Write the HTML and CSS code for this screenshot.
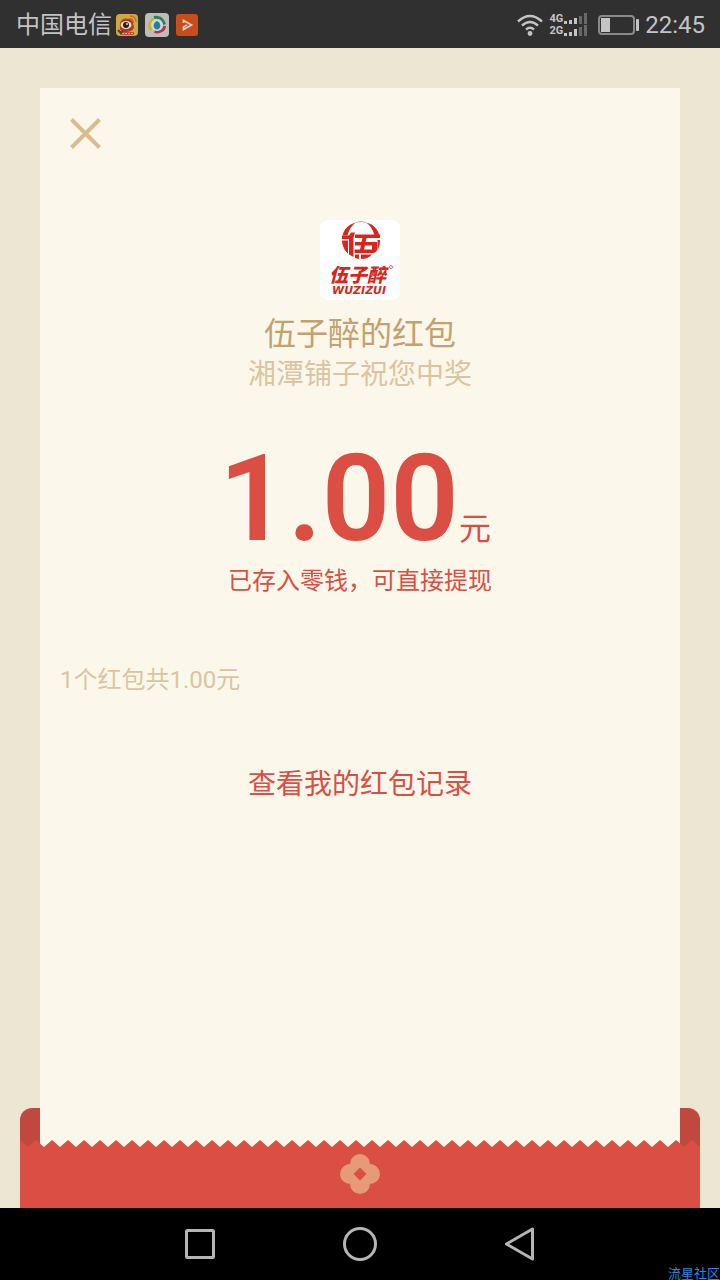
FILE: index.html
```html
<!DOCTYPE html>
<html lang="zh-CN">
<head>
<meta charset="utf-8">
<meta name="viewport" content="width=device-width, initial-scale=1">
<title>伍子醉的红包</title>
<link rel="stylesheet" href="styles.css">
</head>
<body>
<header class="status">
  <span class="carrier">中国电信</span>
  <div class="apps">
    <svg class="app" width="22" height="22" viewBox="0 0 22 22" aria-hidden="true">
      <rect width="22" height="22" rx="4" fill="#cfa83f"/>
      <path d="M4 12C3 7 8 3 12 5c4-2 7 2 5 5 3 5-2 8-7 8-4 0-7-2-6-6z" fill="#b93626"/>
      <ellipse cx="10" cy="11" rx="5.500" ry="4" fill="#e5dccb"/>
      <circle cx="10" cy="11" r="3" fill="#242424"/><circle cx="11" cy="10" r="1" fill="#ddd"/>
      <path d="M14 5q3 0 3 3M14 2q6 0 6 6" fill="none" stroke="#c96e28" stroke-width="1.3"/>
      <path d="M5 18h13v3H4z" fill="#c9502a"/><path d="M6 19.500h11" stroke="#dfb287" stroke-dasharray="2 1"/>
      <path d="M2 16l3 3 2-2" stroke="#404a20" stroke-width="2" fill="none"/>
    </svg>
    <svg class="app" width="24" height="24" viewBox="0 0 24 24" aria-hidden="true">
      <rect width="24" height="24" rx="4" fill="#bdbdbd"/>
      <g fill="none" stroke-width="3">
        <path d="M9 4.500c5-1.500 9 2 10.500 7" stroke="#248647"/>
        <path d="M19.500 13c0 4-5 7-10 5.500" stroke="#b33a32"/>
        <path d="M6.500 17C3 13 5 8 9 6" stroke="#cfb51c"/>
      </g>
      <circle cx="12" cy="12" r="6" fill="#d6d6d6"/>
      <path d="M12 8c4 1 5 8 0 8.500-5-.5-4-7.500 0-8.500z" fill="#237eaa"/>
    </svg>
    <svg class="app" width="22" height="22" viewBox="0 0 22 22" aria-hidden="true">
      <rect width="22" height="22" rx="3" fill="#c94d18"/>
      <path d="M7.500 9V6.500l8 4.500-8 4.500V13l3.500-2" fill="none" stroke="#d9cbc4" stroke-width="1.800"/>
    </svg>
  </div>
  <div class="indicators">
    <svg width="26" height="22" viewBox="0 0 26 22" fill="none" stroke="#c4c4c4" stroke-width="2.400" role="img" aria-label="Wi-Fi">
      <path d="M1 7.500Q13-3.500 25 7.500M5 11.500q8-7 16 0M9 15.500q4-3.500 8 0"/>
      <circle cx="13" cy="19.500" r="2.400" fill="#c4c4c4" stroke="none"/>
    </svg>
    <div class="networks">
      <div class="network"><span>4G</span>
        <svg width="24" height="12" viewBox="0 0 24 12" fill="#c4c4c4" aria-hidden="true"><path d="M0 8h3v3H0zM5 7h3v4H5zM10 5h3v6h-3z"/><path d="M15 3h3v8h-3zM20 0h3v11h-3z" fill="#686868"/></svg>
      </div>
      <div class="network"><span>2G</span>
        <svg width="24" height="12" viewBox="0 0 24 12" fill="#c4c4c4" aria-hidden="true"><path d="M0 8h3v3H0zM5 7h3v4H5zM10 4h3v7h-3z"/><path d="M15 2h3v9h-3zM20 0h3v11h-3z" fill="#686868"/></svg>
      </div>
    </div>
    <svg class="battery" width="41" height="20" viewBox="0 0 41 20" role="img" aria-label="电池">
      <rect x="1" y="1" width="35" height="18" rx="3" fill="none" stroke="#8a8a8a" stroke-width="2"/>
      <rect x="3" y="3" width="9" height="14" fill="#c4c4c4"/><rect x="38" y="4" width="3" height="12" rx="1" fill="#c4c4c4"/>
    </svg>
    <time class="clock">22:45</time>
  </div>
</header>

<main class="screen">
  <div class="envelope-back"></div>
  <section class="card">
    <button class="close" type="button" aria-label="关闭">
      <svg width="32" height="32" viewBox="0 0 32 32" fill="none" stroke="#dabd8c" stroke-width="4"><path d="M1.500 1.500l28 28M29.500 1.500l-28 28"/></svg>
    </button>
    <svg class="avatar" width="80" height="80" viewBox="0 0 80 80" role="img" aria-label="伍子醉">
      <rect width="80" height="80" rx="8" fill="#fff"/>
      <g fill="#da251c">
        <path d="M36 2.500C29 4 24 9 22.500 15.500h5C29 10 31 6 36 2.500zM46 2.500c7 1.500 12 6.500 13.500 13h-5c-1.500-5.500-3.500-9.500-8.500-13z"/>
        <path d="M35 2.500q6-2 12 0-6-1-12 0z"/>
        <path d="M22 20.500h6v13c-3.500-3-6-8-6-13z"/>
        <path d="M22 15.500h7l2-3h4l-1.500 5V37L29 34.500V19h-7z"/>
        <path d="M35 14.500h25V18H46.500l-1 4H57v8c-1 2-2 3-4 3H34.500v-3.500H40l1-4h-6V22h6.500l1-4H35zM45 25.500l-1 4h8v-4z" fill-rule="evenodd"/>
        <path d="M57.500 20H60c0 6-2 10-5 13l2.500-4zM35 34.500h4V39l-4-1zM41 34.500h11c-3 3-6 4.500-11 4.500z"/>
      </g>
      <text x="9" y="62" class="logo-name">伍子醉</text>
      <text x="12" y="74" class="logo-latin">WUZIZUI</text>
      <circle cx="71" cy="47" r="1.500" fill="none" stroke="#da251c" stroke-width=".7"/>
    </svg>
    <h1 class="sender">伍子醉的红包</h1>
    <p class="wish">湘潭铺子祝您中奖</p>
    <p class="amount"><strong class="number">1.00</strong><span class="unit">元</span></p>
    <p class="deposit">已存入零钱，可直接提现</p>
    <p class="count">1个红包共1.00元</p>
    <a class="records" href="#records">查看我的红包记录</a>
  </section>
  <div class="envelope-front">
    <svg class="teeth" width="100%" height="7" aria-hidden="true">
      <defs><pattern id="tooth" width="16" height="7" patternUnits="userSpaceOnUse"><path d="M0 0l8 7 8-7v7H0z" fill="#da4e43"/></pattern></defs>
      <rect width="100%" height="7" fill="url(#tooth)"/>
    </svg>
    <div class="pocket">
      <svg width="40" height="40" viewBox="0 0 40 40" aria-hidden="true">
        <g fill="#e59b78"><circle cx="20" cy="10" r="10"/><circle cx="10" cy="20" r="10"/><circle cx="30" cy="20" r="10"/><circle cx="20" cy="30" r="10"/></g>
        <path d="M20 13.500l6.500 6.500-6.500 6.500-6.500-6.500z" fill="#da4e43"/>
      </svg>
    </div>
  </div>
</main>

<nav class="system">
  <button type="button" aria-label="最近任务"><svg width="34" height="34" viewBox="0 0 34 34"><rect x="3.500" y="3.500" width="27" height="27" rx="1"/></svg></button>
  <button type="button" aria-label="主屏幕"><svg width="34" height="34" viewBox="0 0 34 34"><circle cx="17" cy="17" r="15.500"/></svg></button>
  <button type="button" aria-label="返回"><svg width="34" height="34" viewBox="0 0 34 34"><path d="M29.500 2v30L3.500 17z"/></svg></button>
  <span class="watermark">流星社区</span>
</nav>
</body>
</html>
```
FILE: styles.css
```css
* { box-sizing: border-box; }

body {
  margin: 0;
  min-height: 100vh;
  display: flex;
  flex-direction: column;
  background: #ede6d3;
  font-family: Roboto, "Noto Sans CJK SC", sans-serif;
}

h1, p { margin: 0; font-weight: 400; }
svg { display: block; flex: none; }

button {
  padding: 0;
  border: 0;
  background: none;
  cursor: pointer;
}

.status {
  height: 48px;
  padding: 2px 15px 0 16px;
  display: flex;
  align-items: center;
  background: #303030;
  color: #c4c4c4;
}

.carrier { font-size: 24px; line-height: 46px; }

.apps {
  margin-left: 4px;
  display: flex;
  align-items: center;
  gap: 7px;
}

.indicators {
  margin-left: auto;
  display: flex;
  align-items: center;
}

.networks { margin: 0 10px 0 6px; }

.network {
  display: flex;
  align-items: center;
  gap: 1px;
  font: 700 11px/12px Roboto, sans-serif;
}

.clock { margin-left: 6px; font-size: 24px; }

.screen {
  flex: 1;
  padding: 40px 20px 0;
  display: grid;
  grid-template-columns: 1fr;
  grid-template-rows: 1fr 32px 68px;
}

.envelope-back {
  grid-area: 2 / 1 / 4 / 2;
  border-radius: 12px 12px 0 0;
  background: #c1483f;
}

.card {
  grid-area: 1 / 1 / 3 / 2;
  margin: 0 20px -7px;
  padding: 30px 20px;
  display: flex;
  flex-direction: column;
  align-items: center;
  background: #fcf7eb;
  text-align: center;
}

.close { align-self: flex-start; margin-left: 10px; }
.avatar { margin-top: 70px; }

.logo-name {
  font: italic 900 19px "Noto Sans CJK SC", sans-serif;
  fill: #da251c;
}

.logo-latin {
  font: italic 700 11px "DejaVu Sans", sans-serif;
  fill: #da251c;
}

.sender {
  margin-top: 14px;
  font-size: 32px;
  line-height: 40px;
  color: #c2a26f;
}

.wish { font-size: 28px; line-height: 42px; color: #dbc5a0; }

.amount {
  margin-top: 43px;
  padding-right: 10px;
  display: flex;
  align-items: baseline;
  color: #da4e43;
}

.number { font-size: 120px; line-height: 120px; font-weight: 600; }
.unit { font-size: 32px; line-height: 40px; }
.deposit { margin-top: 4px; font-size: 24px; line-height: 36px; color: #da4e43; }

.count {
  align-self: flex-start;
  margin-top: 63px;
  font-size: 24px;
  line-height: 36px;
  color: #dbc5a0;
}

.records {
  margin-top: 67px;
  font-size: 28px;
  line-height: 40px;
  color: #da4e43;
  text-decoration: none;
}

.envelope-front { grid-area: 3 / 1 / 4 / 2; z-index: 1; }

.pocket {
  height: 61px;
  padding-top: 7px;
  display: flex;
  justify-content: center;
  background: #da4e43;
}

.system {
  position: relative;
  height: 72px;
  display: flex;
  justify-content: center;
  align-items: center;
  gap: 126px;
  background: #000;
}

.system svg { fill: none; stroke: #b5b5b5; stroke-width: 3px; stroke-linejoin: round; }

.watermark {
  position: absolute;
  right: 0;
  bottom: 0;
  font-size: 13px;
  line-height: 12px;
  color: #258be0;
}
```
